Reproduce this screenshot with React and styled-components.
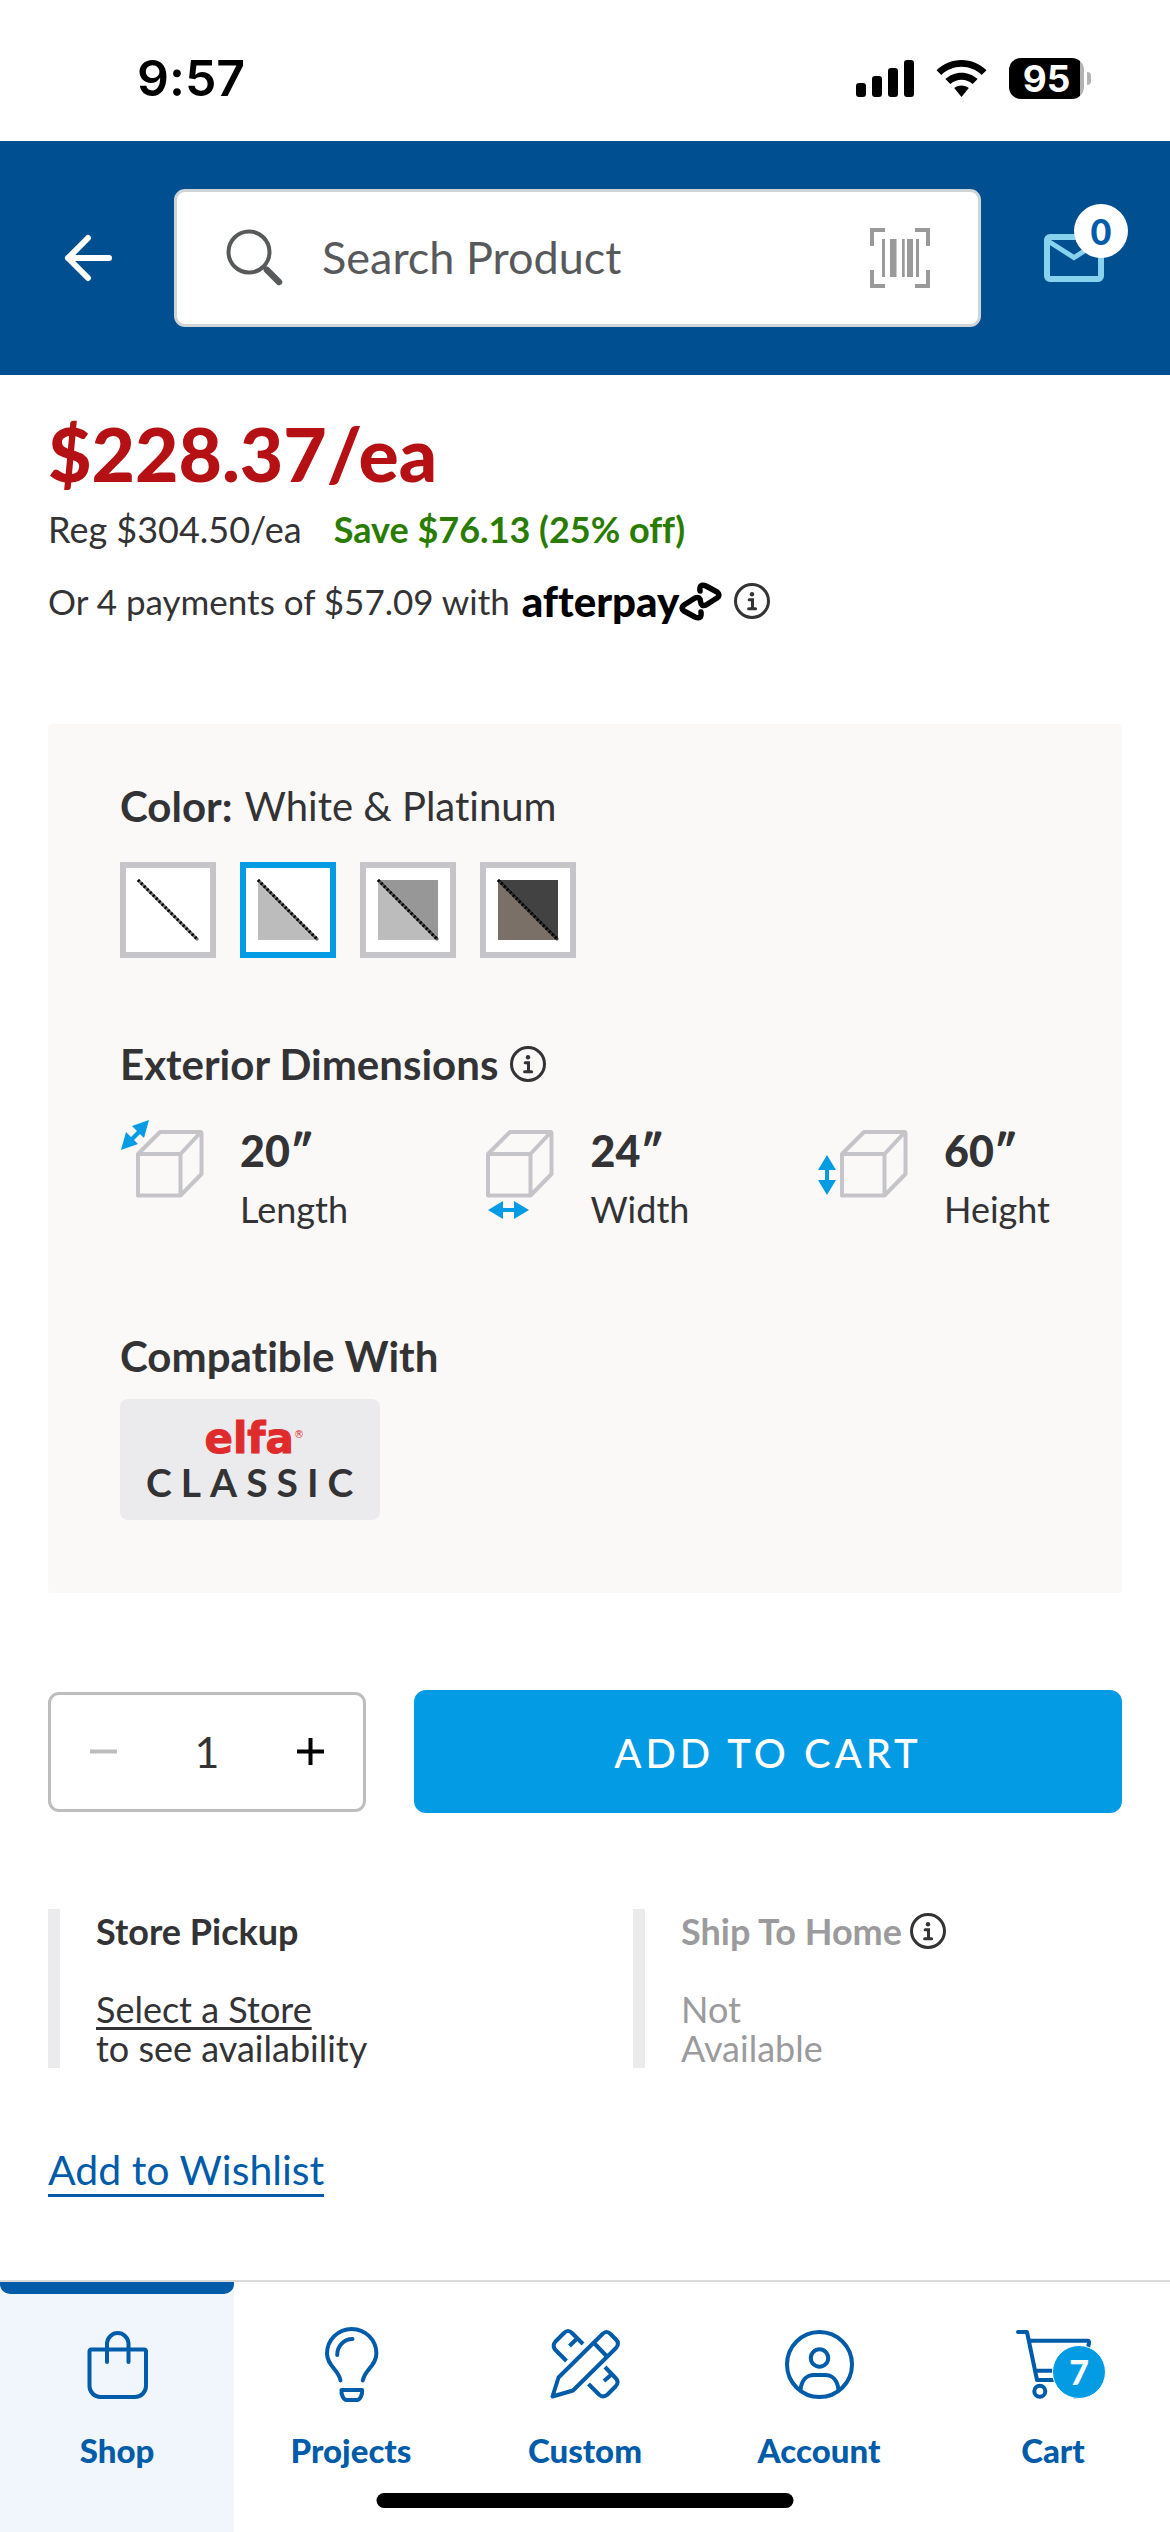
import React, { useState } from "react";
import styled, { createGlobalStyle } from "styled-components";

const GlobalStyle = createGlobalStyle`
  *, *::before, *::after {
    box-sizing: border-box;
  }
  body {
    margin: 0;
    background: #fff;
    color: #333335;
    font-family: Lato, "Open Sans", sans-serif;
    font-size: 36px;
    font-variant-ligatures: none;
  }
  button, input {
    margin: 0;
    padding: 0;
    border: 0;
    background: none;
    color: inherit;
    font: inherit;
  }
  button {
    cursor: pointer;
  }
  h1, h2, p, ul {
    margin: 0;
    padding: 0;
  }
  svg {
    display: block;
    flex: none;
    overflow: visible;
  }
`;

const Page = styled.div`
  display: flex;
  flex-direction: column;
  min-height: 100vh;
`;

/* status bar */

const StatusBar = styled.div`
  display: flex;
  align-items: center;
  justify-content: space-between;
  height: 141px;
  padding: 15px 79px 0 137px;
  color: #000;
`;
const Time = styled.span`
  font-family: Inter, sans-serif;
  font-size: 50px;
  font-weight: 600;
  line-height: 60px;
`;
const StatusIcons = styled.div`
  display: flex;
  align-items: center;
  gap: 22px;
`;
const Battery = styled.div`
  display: flex;
  align-items: center;
  gap: 3px;
`;
const BatteryBody = styled.span`
  width: 75px;
  height: 41px;
  border-radius: 12px;
  background: linear-gradient(to right, #000 71px, #b3b3b3 71px);
  color: #fff;
  font-family: Inter, sans-serif;
  font-size: 37px;
  font-weight: 700;
  line-height: 41px;
  text-align: center;
`;
const BatteryCap = styled.span`
  width: 4px;
  height: 13px;
  border-radius: 0 4px 4px 0;
  background: #b3b3b3;
`;

/* header */

const Header = styled.header`
  display: flex;
  align-items: center;
  height: 234px;
  padding: 0 66px 0 64px;
  background: #004f91;
`;
const IconButton = styled.button`
  display: flex;
  align-items: center;
  justify-content: center;
`;
const SearchBox = styled.div`
  display: flex;
  flex: 1;
  align-items: center;
  min-width: 0;
  height: 138px;
  margin: 0 63px 0 62px;
  padding: 0 48px;
  border: 3px solid #cfd4d6;
  border-radius: 11px;
  background: #fff;
`;
const SearchInput = styled.input`
  flex: 1;
  min-width: 0;
  margin: 0 24px 0 37px;
  padding-bottom: 2px;
  color: #58595b;
  font-size: 45px;
  line-height: 60px;
  outline: 0;
  &::placeholder {
    color: #58595b;
    opacity: 1;
  }
`;
const Inbox = styled(IconButton)`
  position: relative;
`;
const InboxCount = styled.span`
  position: absolute;
  top: -30px;
  right: -24px;
  width: 54px;
  height: 54px;
  border-radius: 50%;
  background: #fff;
  color: #005ca9;
  font-size: 36px;
  font-weight: 900;
  line-height: 54px;
  text-align: center;
`;

/* product */

const Main = styled.main`
  flex: 1;
  padding: 38px 48px 0;
`;
const Price = styled.h1`
  color: #b51114;
  font-size: 75px;
  font-weight: 900;
  line-height: 80px;
`;
const PriceLine = styled.p`
  display: flex;
  align-items: center;
  gap: ${({ $gap }) => $gap}px;
  margin-top: ${({ $top }) => $top}px;
  line-height: 48px;
`;
const Payments = styled.span`
  font-size: 35px;
`;
const Save = styled.strong`
  color: #2a7c00;
`;
const Afterpay = styled.span`
  display: flex;
  align-items: center;
  color: #000;
  font-size: 42px;
  font-weight: 900;
`;

const Options = styled.section`
  margin-top: 99px;
  padding: 58px 72px 73px;
  border-radius: 4px;
  background: #faf9f8;
`;
const OptionTitle = styled.h2`
  display: flex;
  align-items: center;
  gap: 12px;
  margin-top: ${({ $top }) => $top || 0}px;
  font-size: 42px;
  font-weight: 700;
  line-height: 48px;
`;
const OptionValue = styled.span`
  font-size: 40px;
  font-weight: 400;
`;
const Swatches = styled.div`
  display: flex;
  gap: 24px;
  margin-top: 32px;
`;
const Swatch = styled.label`
  padding: 12px;
  border: 6px solid ${({ $active }) => ($active ? "#049be5" : "#c5c5c9")};
  background: #fff;
  cursor: pointer;
`;
const SwatchInput = styled.input`
  position: absolute;
  opacity: 0;
`;
const Dimensions = styled.ul`
  display: grid;
  grid-template-columns: 351fr 354fr 225fr;
  margin-top: 30px;
  list-style: none;
`;
const Dimension = styled.li`
  display: flex;
  gap: 24px;
`;
const DimensionText = styled.div`
  padding-top: 4px;
  line-height: 58px;
  white-space: nowrap;
`;
const DimensionValue = styled.strong`
  display: block;
  font-size: 43px;
  font-weight: 900;
`;
const Compatible = styled.div`
  display: inline-flex;
  flex-direction: column;
  align-items: center;
  height: 121px;
  margin-top: 19px;
  padding: 18px 18px 0 26px;
  border-radius: 8px;
  background: #ebebee;
`;
const Brand = styled.span`
  color: #e02b2d;
  font-family: "DejaVu Sans", sans-serif;
  font-size: 42px;
  font-weight: 700;
  line-height: 44px;
  -webkit-text-stroke: 1px #e02b2d;
`;
const Registered = styled.sup`
  font-size: 10px;
  font-weight: 400;
  line-height: 10px;
  -webkit-text-stroke: 0;
`;
const Line = styled.span`
  font-size: 39px;
  font-weight: 700;
  letter-spacing: 9px;
  line-height: 42px;
`;

const BuyRow = styled.div`
  display: flex;
  align-items: center;
  gap: 48px;
  margin-top: 97px;
`;
const Quantity = styled.div`
  display: flex;
  align-items: center;
  justify-content: space-between;
  width: 318px;
  height: 120px;
  padding: 0 39px;
  border: 3px solid #bdbdbd;
  border-radius: 11px;
`;
const QuantityInput = styled.input`
  width: 80px;
  font-size: 43px;
  text-align: center;
`;
const AddToCart = styled.button`
  flex: 1;
  height: 123px;
  padding-top: 3px;
  border-radius: 12px;
  background: #049be5;
  color: #fff;
  font-size: 40px;
  font-weight: 500;
  letter-spacing: 4px;
`;

const Fulfillment = styled.div`
  display: grid;
  grid-template-columns: 585fr 489fr;
  margin-top: 96px;
`;
const Method = styled.section`
  padding-left: 36px;
  border-left: 12px solid #ebebee;
  color: ${({ $disabled }) => ($disabled ? "#9b9b9d" : "#333335")};
  line-height: 39px;
`;
const MethodTitle = styled.h2`
  display: flex;
  align-items: center;
  gap: 8px;
  padding-top: 2px;
  margin-bottom: 39px;
  font-size: 36px;
  font-weight: 700;
  line-height: 40px;
`;
const StoreLink = styled.a`
  color: inherit;
  text-decoration-thickness: 3px;
  text-underline-offset: 4px;
`;
const Wishlist = styled.a`
  display: inline-block;
  margin-top: 78px;
  border-bottom: 3px solid #005ca9;
  color: #005ca9;
  font-size: 41px;
  line-height: 48px;
  text-decoration: none;
`;

/* tab bar */

const TabBar = styled.nav`
  position: sticky;
  bottom: 0;
  display: grid;
  grid-template-columns: repeat(5, 1fr);
  border-top: 2px solid #d8dad9;
  background: #fff;
`;
const Tab = styled.a`
  display: flex;
  flex-direction: column;
  align-items: center;
  gap: 30px;
  padding-bottom: 62px;
  background: ${({ $active }) => ($active ? "#f1f6fd" : "#fff")};
  color: #005ca9;
  font-size: 33px;
  font-weight: 900;
  line-height: 40px;
  text-decoration: none;
  &::before {
    content: "";
    align-self: stretch;
    height: 12px;
    margin-bottom: 4px;
    border-radius: 0 0 10px 10px;
    background: ${({ $active }) => ($active ? "#005ca9" : "none")};
  }
`;
const TabIcon = styled.span`
  position: relative;
`;
const CartCount = styled.span`
  position: absolute;
  top: 17px;
  right: -17px;
  width: 54px;
  height: 54px;
  border: 1px solid #fff;
  border-radius: 50%;
  background: #049be5;
  color: #fff;
  font-size: 34px;
  line-height: 52px;
  text-align: center;
`;
const HomeIndicator = styled.span`
  position: absolute;
  bottom: 24px;
  left: 50%;
  width: 417px;
  height: 15px;
  border-radius: 8px;
  background: #000;
  transform: translateX(-50%);
`;

const InfoIcon = () => (
  <svg width="36" height="36" viewBox="0 0 36 36" fill="none" stroke="#333335">
    <circle cx="18" cy="18" r="16.5" strokeWidth="3" />
    <circle cx="18" cy="11.3" r="2.2" fill="#333335" stroke="none" />
    <path d="M15.2 16.8h3.3v9M14.6 25.8h7" strokeWidth="3" strokeLinecap="round" />
  </svg>
);

const SignalIcon = () => (
  <svg width="58" height="37" viewBox="0 0 58 37">
    <rect y="23" width="10" height="14" rx="3" />
    <rect x="16" y="16" width="10" height="21" rx="3" />
    <rect x="32" y="8" width="10" height="29" rx="3" />
    <rect x="48" width="10" height="37" rx="3" />
  </svg>
);

const WifiIcon = () => (
  <svg width="51" height="37" viewBox="0 0 51 37">
    <path d="M25.5 0C35 0 44 3.8 50.5 10.2L45.7 15C40.3 9.8 33.2 6.8 25.5 6.8S10.7 9.8 5.3 15L.5 10.2C7 3.8 16 0 25.5 0Z" />
    <path d="M25.5 12.7c6.2 0 11.8 2.4 16.1 6.3l-4.9 5c-3-2.7-6.9-4.3-11.2-4.3s-8.2 1.6-11.2 4.3l-4.9-5c4.3-3.9 9.900-6.3 16.1-6.3Z" />
    <path d="M25.5 25.4c2.8 0 5.4 1 7.3 2.7L25.5 37l-7.3-8.9c1.9-1.7 4.5-2.7 7.3-2.7Z" />
  </svg>
);

const BackIcon = () => (
  <svg width="48" height="46" viewBox="0 0 48 46" fill="none" stroke="#fff" strokeWidth="6" strokeLinecap="round" strokeLinejoin="round">
    <path d="M24 3 4 23l20 20M4 23h41" />
  </svg>
);

const SearchIcon = () => (
  <svg width="60" height="60" viewBox="0 0 60 60" fill="none" stroke="#58595b">
    <circle cx="24" cy="24" r="20.5" strokeWidth="4" />
    <path d="m38.5 38.5 4 4" strokeWidth="4" />
    <path d="m42 42 12 12" strokeWidth="6.5" strokeLinecap="round" />
  </svg>
);

const BarcodeIcon = () => (
  <svg width="60" height="60" viewBox="0 0 60 60" fill="#9a9a9a">
    <path d="M0 0h15v4H4v14H0zM45 0h15v18h-4V4H45zM0 42h4v14h11v4H0zM56 42h4v18H45v-4h11z" />
    <path d="M12 11h3v38h-3zM20 11h6.5v38H20zM32 11h2.7v38H32zM37 11h6v38h-6zM46 11h3v38h-3z" />
  </svg>
);

const MailIcon = () => (
  <svg width="60" height="48" viewBox="0 0 60 48" fill="none" stroke="#87d3ee" strokeWidth="6">
    <rect x="3" y="3" width="54" height="42" rx="3" />
    <path d="m4 7 26 16.5L56 7" strokeWidth="5" />
  </svg>
);

const AfterpayIcon = () => (
  <svg width="43" height="39" viewBox="0 0 43 39" fill="none" stroke="#000" strokeWidth="5.5" strokeLinecap="round" strokeLinejoin="round">
    <path d="M21 9Q20 1 27 4L38 10Q42 13 38 16L27 23Q22 25 21.5 19.5Q21 14 16 16L5 23Q1 26 5 29L16 35Q23 38 22 30" />
  </svg>
);

const SwatchIcon = ({ top, bottom }) => (
  <svg width="60" height="60" viewBox="0 0 60 60">
    <path d="M0 0h60v60z" fill={top} />
    <path d="M0 0v60h60z" fill={bottom} />
    <path d="m0 0 60 60" stroke="#000" strokeWidth="3" strokeOpacity="0.55" />
    <path d="m0 0 60 60" stroke="#000" strokeWidth="3" strokeDasharray="2 2.24" />
  </svg>
);

const arrows = {
  length: "M29 2 24 20 12 8ZM1 32 6 14 18 26ZM10 20 20 10l3 3-10 10z",
  width: "M18 92 33 83v7h11v-7l15 9-15 9v-7H33v7z",
  height: "M3 37l9 15H5v10h7l-9 15-9-15h7V52h-7z",
};

const CubeIcon = ({ arrow }) => (
  <svg width="96" height="102" viewBox="0 0 96 102">
    <path
      d="M18 36h42.5v41.5H18zM18 36l22-22h41L60.5 36M60.5 77.5 81.5 56V14"
      fill="none"
      stroke="#c5c5c9"
      strokeWidth="4"
      strokeLinejoin="round"
    />
    <path d={arrows[arrow]} fill="#049be5" />
  </svg>
);

const NavIcon = ({ viewBox = "0 0 72 72", children }) => (
  <svg width="72" height="72" viewBox={viewBox} fill="none" stroke="#005ca9" strokeWidth="4" strokeLinecap="round" strokeLinejoin="round">
    {children}
  </svg>
);

const swatches = [
  { name: "White", top: "#fff", bottom: "#fff" },
  { name: "White & Platinum", top: "#fff", bottom: "#bcbcbc" },
  { name: "Grey & Platinum", top: "#979797", bottom: "#bcbcbc" },
  { name: "Graphite & Driftwood", top: "#434242", bottom: "#7b7067" },
];

const dimensions = [
  { label: "Length", value: "20″", arrow: "length" },
  { label: "Width", value: "24″", arrow: "width" },
  { label: "Height", value: "60″", arrow: "height" },
];

const tabs = [
  {
    label: "Shop",
    active: true,
    icon: (
      <NavIcon>
        <path d="M10 21.5h53a2 2 0 0 1 2 2V58a11 11 0 0 1-11 11H19.5a11 11 0 0 1-11-11V23.5a2 2 0 0 1 1.5-2Z" />
        <path d="M26 34V15a10.8 11 0 0 1 21.5 0v19" />
      </NavIcon>
    ),
  },
  {
    label: "Projects",
    icon: (
      <NavIcon viewBox="0 4 72 72">
        <path d="M25.5 56.5C24 46 12 42 12 29.5a24.7 24.5 0 0 1 49.4 0C61.4 42 49.4 46 47.8 56.5" />
        <path d="M22.2 31C22.2 22 29 15 37.5 15" />
        <path d="M26.5 66h20.6c.5 4.5-2 10-5 10H31.5c-3 0-5.5-5.5-5-10Z" />
      </NavIcon>
    ),
  },
  {
    label: "Custom",
    icon: (
      <NavIcon>
        <g strokeLinecap="butt">
          <path d="m3.5 68.5 6-19L53.5 6q4-4 8 0l5.5 5.5q4 4 0 8.5L24 62.5ZM45.5 15.5 58 28.5" />
          <path d="m34 16-11-11q-4-4-8 0L6.5 13.5q-3.5 4-.5 8L17.5 33M28.5 10l-8 8" />
          <path d="m39.5 56 11 11q4 3 8-.5l8-8q4-4.5.5-8L56 39M63 46l-8 7" />
        </g>
      </NavIcon>
    ),
  },
  {
    label: "Account",
    icon: (
      <NavIcon>
        <circle cx="36.5" cy="36.5" r="32.5" />
        <circle cx="36.5" cy="30" r="8.7" />
        <path d="M17.5 62C18.5 52 24 47 31 47h11c7 0 12.5 5 13.5 15" />
      </NavIcon>
    ),
  },
  {
    label: "Cart",
    count: 7,
    icon: (
      <NavIcon viewBox="3 0 72 72">
        <path d="M4 4h9l10 48h42M16 12.7h57.5q2 0 1.5 2.3L69 42.7H21" />
        <circle cx="25.8" cy="63.3" r="5.5" />
        <circle cx="62" cy="63.3" r="5.5" />
      </NavIcon>
    ),
  },
];

const App = () => {
  const [color, setColor] = useState("White & Platinum");
  const [quantity, setQuantity] = useState(1);

  return (
    <Page>
      <GlobalStyle />
      <StatusBar>
        <Time>9:57</Time>
        <StatusIcons>
          <SignalIcon />
          <WifiIcon />
          <Battery>
            <BatteryBody>95</BatteryBody>
            <BatteryCap />
          </Battery>
        </StatusIcons>
      </StatusBar>

      <Header>
        <IconButton type="button" aria-label="Back">
          <BackIcon />
        </IconButton>
        <SearchBox>
          <SearchIcon />
          <SearchInput type="text" aria-label="Search Product" placeholder="Search Product" />
          <IconButton type="button" aria-label="Scan barcode">
            <BarcodeIcon />
          </IconButton>
        </SearchBox>
        <Inbox type="button" aria-label="Inbox">
          <MailIcon />
          <InboxCount>0</InboxCount>
        </Inbox>
      </Header>

      <Main>
        <Price>$228.37/ea</Price>
        <PriceLine $top={12} $gap={32}>
          <span>Reg $304.50/ea</span>
          <Save>Save $76.13 (25% off)</Save>
        </PriceLine>
        <PriceLine $top={24} $gap={12}>
          <Payments>Or 4 payments of $57.09 with</Payments>
          <Afterpay>
            afterpay
            <AfterpayIcon />
          </Afterpay>
          <IconButton type="button" aria-label="About afterpay">
            <InfoIcon />
          </IconButton>
        </PriceLine>

        <Options>
          <OptionTitle>
            Color: <OptionValue>{color}</OptionValue>
          </OptionTitle>
          <Swatches>
            {swatches.map(({ name, top, bottom }) => (
              <Swatch key={name} $active={name === color}>
                <SwatchInput
                  type="radio"
                  name="color"
                  aria-label={name}
                  checked={name === color}
                  onChange={() => setColor(name)}
                />
                <SwatchIcon top={top} bottom={bottom} />
              </Swatch>
            ))}
          </Swatches>

          <OptionTitle $top={82}>
            Exterior Dimensions
            <IconButton type="button" aria-label="About dimensions">
              <InfoIcon />
            </IconButton>
          </OptionTitle>
          <Dimensions>
            {dimensions.map(({ label, value, arrow }) => (
              <Dimension key={label}>
                <CubeIcon arrow={arrow} />
                <DimensionText>
                  <DimensionValue>{value}</DimensionValue>
                  {label}
                </DimensionText>
              </Dimension>
            ))}
          </Dimensions>

          <OptionTitle $top={94}>Compatible With</OptionTitle>
          <Compatible>
            <Brand>
              elfa<Registered>®</Registered>
            </Brand>
            <Line>CLASSIC</Line>
          </Compatible>
        </Options>

        <BuyRow>
          <Quantity>
            <IconButton type="button" aria-label="Decrease" onClick={() => setQuantity(Math.max(1, quantity - 1))}>
              <svg width="27" height="27" viewBox="0 0 27 27" stroke={quantity > 1 ? "#000" : "#bdbdbd"} strokeWidth="4">
                <path d="M0 13.5h27" />
              </svg>
            </IconButton>
            <QuantityInput
              type="text"
              aria-label="Quantity"
              value={quantity}
              onChange={(e) => setQuantity(Number(e.target.value) || 1)}
            />
            <IconButton type="button" aria-label="Increase" onClick={() => setQuantity(quantity + 1)}>
              <svg width="27" height="27" viewBox="0 0 27 27" stroke="#000" strokeWidth="4">
                <path d="M0 13.5h27M13.5 0v27" />
              </svg>
            </IconButton>
          </Quantity>
          <AddToCart type="button">ADD TO CART</AddToCart>
        </BuyRow>

        <Fulfillment>
          <Method>
            <MethodTitle>Store Pickup</MethodTitle>
            <StoreLink href="#stores">Select a Store</StoreLink>
            <p>to see availability</p>
          </Method>
          <Method $disabled>
            <MethodTitle>
              Ship To Home
              <IconButton type="button" aria-label="About shipping">
                <InfoIcon />
              </IconButton>
            </MethodTitle>
            <p>
              Not
              <br />
              Available
            </p>
          </Method>
        </Fulfillment>

        <Wishlist href="#wishlist">Add to Wishlist</Wishlist>
      </Main>

      <TabBar>
        {tabs.map(({ label, active, icon, count }) => (
          <Tab key={label} href={`#${label.toLowerCase()}`} $active={active}>
            <TabIcon>
              {icon}
              {count && <CartCount>{count}</CartCount>}
            </TabIcon>
            {label}
          </Tab>
        ))}
        <HomeIndicator />
      </TabBar>
    </Page>
  );
};

export default App;
